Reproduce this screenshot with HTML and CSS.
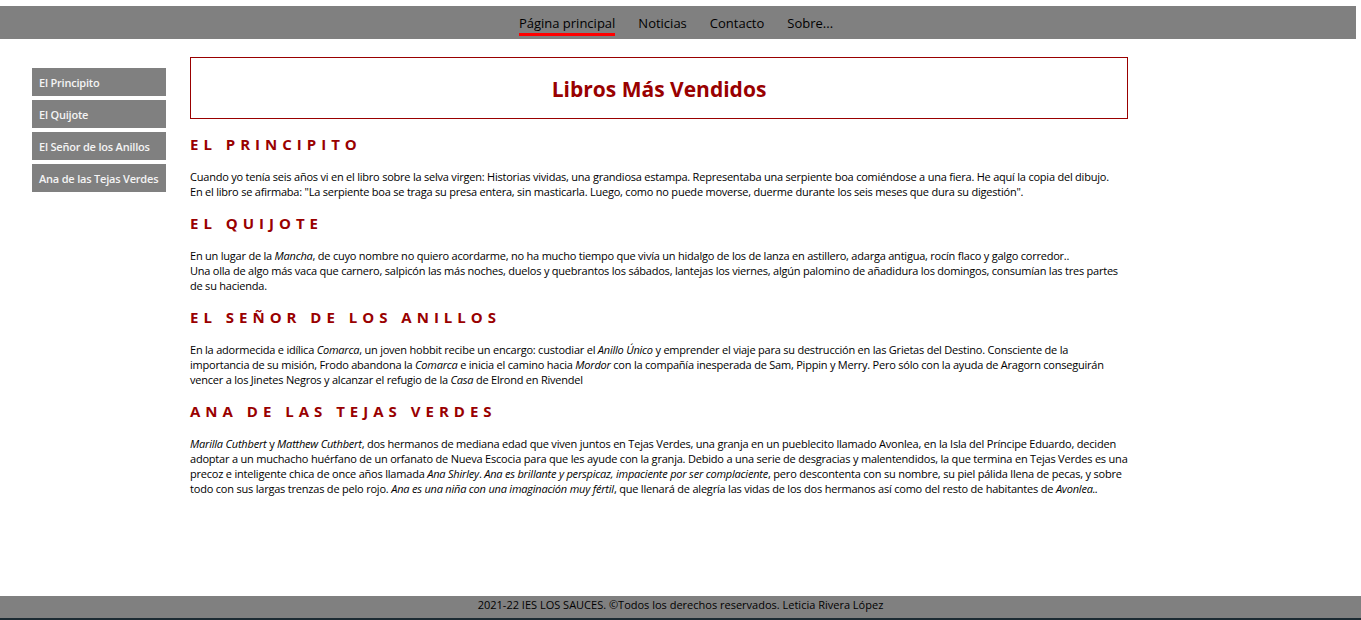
FILE: index.html
```html
<!DOCTYPE html>
<html lang="es">
<head>
<meta charset="utf-8">
<title>Libros Más Vendidos</title>
<link rel="stylesheet" href="styles.css">
</head>
<body>
<header class="topbar">
  <nav class="topnav">
    <a class="active" href="#">Página principal</a>
    <a href="#">Noticias</a>
    <a href="#">Contacto</a>
    <a href="#">Sobre...</a>
  </nav>
</header>
<div class="layout">
  <aside class="sidebar">
    <a href="#">El Principito</a>
    <a href="#">El Quijote</a>
    <a href="#">El Señor de los Anillos</a>
    <a href="#">Ana de las Tejas Verdes</a>
  </aside>
  <main class="content">
    <div class="titlebox"><h1>Libros Más Vendidos</h1></div>
    <h2>El Principito</h2>
    <p>Cuando yo tenía seis años vi en el libro sobre la selva virgen: Historias vividas, una grandiosa estampa. Representaba una serpiente boa comiéndose a una fiera. He aquí la copia del dibujo.<br>En el libro se afirmaba: "La serpiente boa se traga su presa entera, sin masticarla. Luego, como no puede moverse, duerme durante los seis meses que dura su digestión".</p>
    <h2>El Quijote</h2>
    <p>En un lugar de la <em>Mancha</em>, de cuyo nombre no quiero acordarme, no ha mucho tiempo que vivía un hidalgo de los de lanza en astillero, adarga antigua, rocín flaco y galgo corredor..<br>Una olla de algo más vaca que carnero, salpicón las más noches, duelos y quebrantos los sábados, lantejas los viernes, algún palomino de añadidura los domingos, consumían las tres partes de su hacienda.</p>
    <h2>El Señor de los Anillos</h2>
    <p>En la adormecida e idílica <em>Comarca</em>, un joven hobbit recibe un encargo: custodiar el <em>Anillo Único</em> y emprender el viaje para su destrucción en las Grietas del Destino. Consciente de la importancia de su misión, Frodo abandona la <em>Comarca</em> e inicia el camino hacia <em>Mordor</em> con la compañía inesperada de Sam, Pippin y Merry. Pero sólo con la ayuda de Aragorn conseguirán vencer a los Jinetes Negros y alcanzar el refugio de la <em>Casa</em> de Elrond en Rivendel</p>
    <h2>Ana de las Tejas Verdes</h2>
    <p class="ana"><em>Marilla Cuthbert</em> y <em>Matthew Cuthbert</em>, dos hermanos de mediana edad que viven juntos en Tejas Verdes, una granja en un pueblecito llamado Avonlea, en la Isla del Príncipe Eduardo, deciden adoptar a un muchacho huérfano de un orfanato de Nueva Escocia para que les ayude con la granja. Debido a una serie de desgracias y malentendidos, la que termina en Tejas Verdes es una precoz e inteligente chica de once años llamada <em>Ana Shirley</em>. <em>Ana es brillante y perspicaz, impaciente por ser complaciente</em>, pero descontenta con su nombre, su piel pálida llena de pecas, y sobre todo con sus largas trenzas de pelo rojo. <em>Ana es una niña con una imaginación muy fértil</em>, que llenará de alegría las vidas de los dos hermanos así como del resto de habitantes de <em>Avonlea..</em></p>
  </main>
</div>
<footer class="footer">2021-22 IES LOS SAUCES. ©Todos los derechos reservados. Leticia Rivera López</footer>
<div class="bottomstrip"></div>
</body>
</html>
```
FILE: styles.css
```css
html, body {
  margin: 0;
  padding: 0;
}
body {
  font-family: "Comic Sans MS", "Open Sans", sans-serif;
  color: #000;
  background: #fff;
  min-height: 100vh;
  display: flex;
  flex-direction: column;
  padding-top: 6px;
  box-sizing: border-box;
}
.topbar {
  background: #808080;
  width: 1356px;
  height: 33px;
  display: flex;
  justify-content: center;
  align-items: flex-start;
}
.topnav {
  display: flex;
  gap: 23px;
  padding-right: 4px;
}
.topnav a {
  color: #000;
  text-decoration: none;
  font-size: 13px;
  line-height: 18px;
  padding-top: 8px;
  padding-bottom: 1px;
  border-bottom: 3px solid transparent;
}
.topnav a.active {
  border-bottom-color: #ff0000;
}
.layout {
  display: flex;
  align-items: flex-start;
  padding-top: 18px;
}
.sidebar {
  width: 134px;
  margin-left: 32px;
  margin-top: 11px;
  display: flex;
  flex-direction: column;
  gap: 4px;
}
.sidebar a {
  display: block;
  background: #808080;
  color: #f4f4f4;
  text-decoration: none;
  font-size: 11px;
  font-weight: 600;
  letter-spacing: -0.2px;
  height: 28px;
  line-height: 29px;
  padding-left: 7px;
  white-space: nowrap;
}
.content {
  margin-left: 24px;
  width: 938px;
}
.titlebox {
  border: 1px solid #990000;
  height: 60px;
  display: flex;
  align-items: center;
  justify-content: center;
}
.titlebox h1 {
  margin: 0;
  color: #990000;
  font-size: 21px;
  font-weight: bold;
  padding-top: 2px;
}
.content h2 {
  margin: 14px 0 0;
  color: #990000;
  font-size: 15px;
  font-weight: bold;
  text-transform: uppercase;
  letter-spacing: 5px;
  line-height: 20px;
}
.content h2:first-of-type {
  margin-top: 15px;
}
.content p {
  margin: 15px 0 0;
  font-size: 11px;
  letter-spacing: -0.22px;
  line-height: 15px;
}
.content p.ana {
  letter-spacing: -0.205px;
}
.footer {
  margin-top: auto;
  background: #808080;
  height: 22px;
  line-height: 17px;
  text-align: center;
  font-size: 11px;
  width: 1361px;
}
.bottomstrip {
  height: 2px;
  background: #1c2b33;
}
```
